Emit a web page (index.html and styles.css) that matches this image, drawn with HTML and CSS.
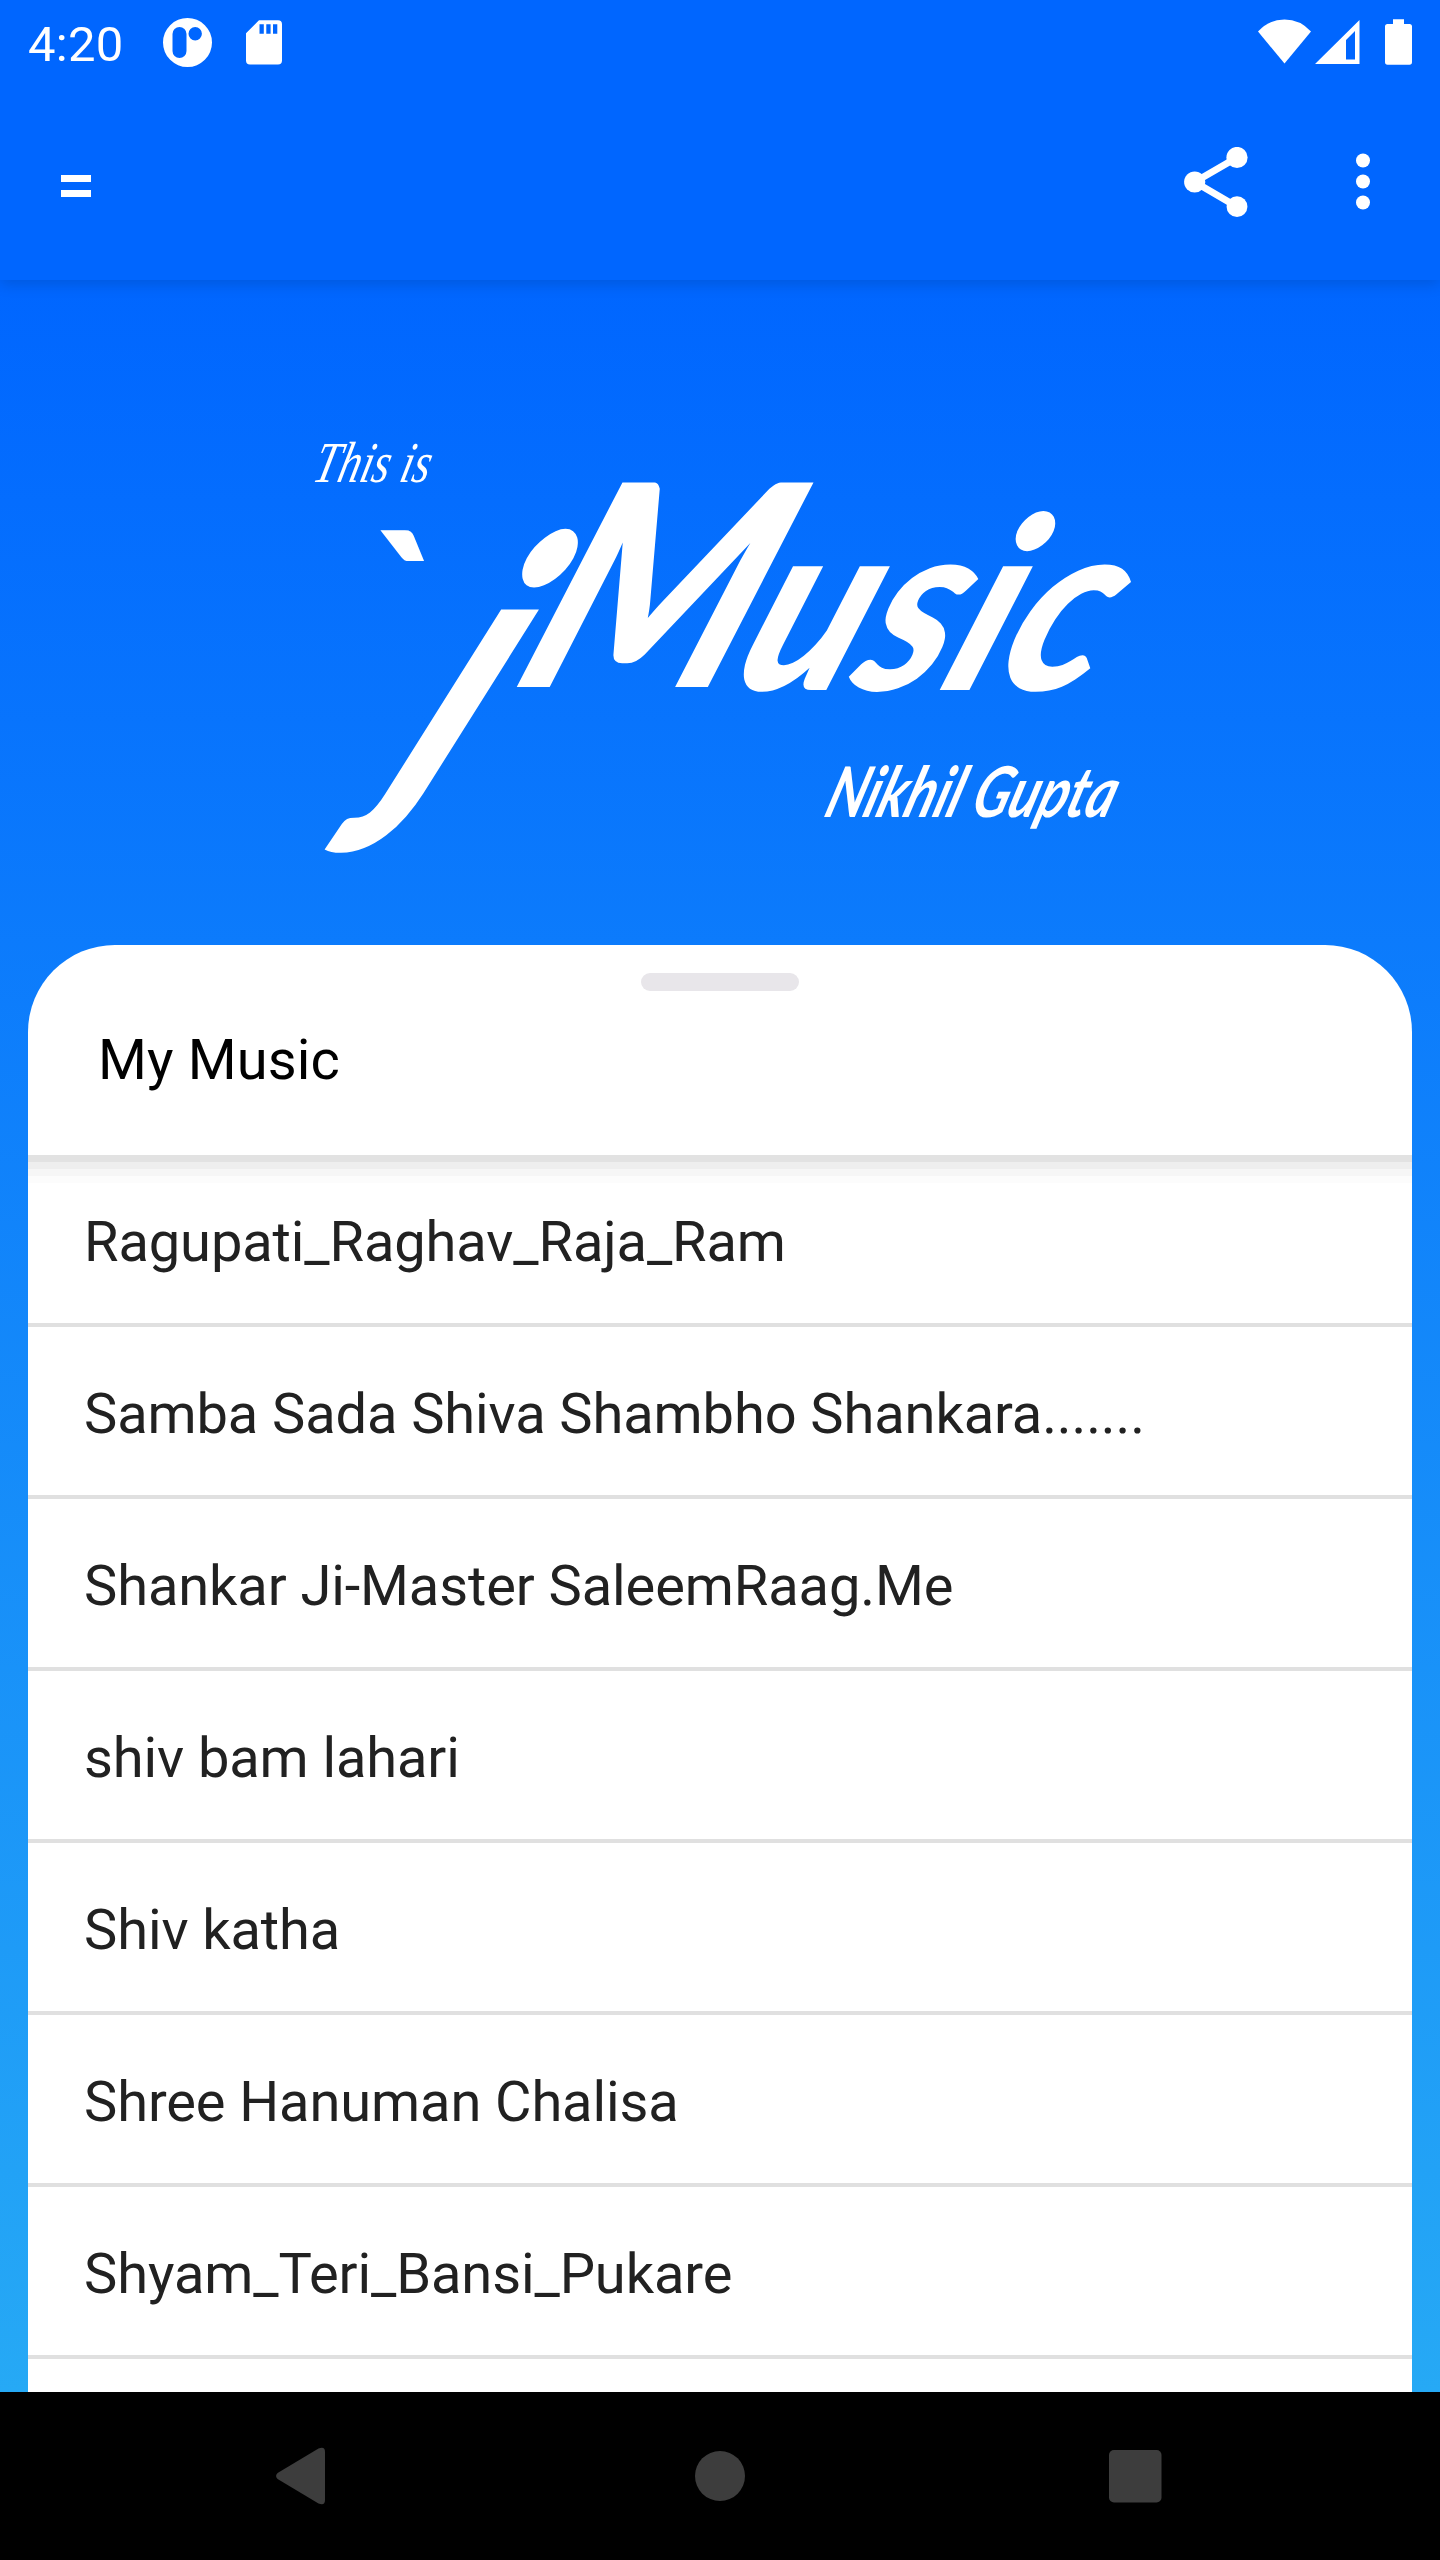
FILE: index.html
```html
<!DOCTYPE html>
<html lang="en">
<head>
<meta charset="utf-8">
<title>jMusic</title>
<link rel="stylesheet" href="styles.css">
</head>
<body>
<div class="screen">
  <header class="top">
    <div class="status">
      <span class="clock">4:20</span>
      <svg class="status-app" width="49" height="49" viewBox="0 0 49 49"><path fill="#fff" fill-rule="evenodd" d="M24.500 0a24.500 24.500 0 1 0 0 49a24.500 24.500 0 1 0 0-49zM16.500 9a7 7 0 0 1 7 7v17a7 7 0 0 1-14 0v-17a7 7 0 0 1 7-7zM32.200 9a6.700 6.700 0 1 1 0 13.400a6.700 6.700 0 1 1 0-13.400z"/></svg>
      <svg class="status-sd" width="36" height="45" viewBox="0 0 36 45"><path fill="#fff" fill-rule="evenodd" d="M13 .3H32a4 4 0 0 1 4 4V40.500a4 4 0 0 1-4 4H4a4 4 0 0 1-4-4V13.300zM13.500 4.300v9.500h4.300v-9.500zM20.300 4.300v9.500h4.300v-9.500zM27 4.300v9.500h4.300v-9.500z"/></svg>
      <div class="status-right">
        <svg width="53" height="46" viewBox="0 0 53 46"><path fill="#fff" d="M0 12.500Q11 .5 26.500 .5T53 12.500L26.500 44.500z"/></svg>
        <svg class="cell" width="45" height="46" viewBox="0 0 45 46"><path fill="#fff" fill-rule="evenodd" d="M0 45L44.500 1V45zM31 21V40.500h9V12z"/></svg>
        <svg class="battery" width="27" height="46" viewBox="0 0 27 46"><path fill="#fff" d="M8 .3H19V5H24.500Q27 5 27 7.500V43Q27 45.700 24.500 45.700H2.500Q0 45.700 0 43V7.500Q0 5 2.500 5H8z"/></svg>
      </div>
    </div>
    <div class="toolbar">
      <div class="menu"><i></i><i></i></div>
      <svg class="share" width="64" height="71" viewBox="0 0 64 71"><g fill="#fff"><circle cx="53" cy="10.500" r="10.600"/><circle cx="10.700" cy="35" r="10.600"/><circle cx="53" cy="59.700" r="10.400"/></g><path d="M53 10.500L10.700 35L53 59.700" fill="none" stroke="#fff" stroke-width="6.800"/></svg>
      <svg class="more" width="14" height="57" viewBox="0 0 14 57"><g fill="#fff"><circle cx="7" cy="7.500" r="7"/><circle cx="7" cy="28.500" r="7"/><circle cx="7" cy="49.500" r="7"/></g></svg>
    </div>
  </header>
  <main class="content">
    <svg class="logo" width="1440" height="660" viewBox="0 285 1440 660" fill="#fff">
      <text class="logo-intro" transform="translate(311 482) skewX(-14)" textLength="116" lengthAdjust="spacingAndGlyphs">This is</text>
      <text class="logo-mark" transform="translate(358 680)">`</text>
      <text class="logo-j" transform="translate(382 790) skewX(-28) scale(.8 1)">j</text>
      <text class="logo-m" transform="translate(508 687) skewX(-22)" textLength="228" lengthAdjust="spacingAndGlyphs">M</text>
      <text class="logo-usic" transform="translate(727 690) skewX(-22)" textLength="362" lengthAdjust="spacingAndGlyphs">usic</text>
      <text class="logo-author" transform="translate(822 817) skewX(-18)" textLength="288" lengthAdjust="spacingAndGlyphs">Nikhil Gupta</text>
    </svg>
    <section class="sheet">
      <div class="sheet-head">
        <div class="handle"></div>
        <h1>My Music</h1>
      </div>
      <ul class="songs">
        <li>Ragupati_Raghav_Raja_Ram</li>
        <li>Samba Sada Shiva Shambho Shankara.......</li>
        <li>Shankar Ji-Master SaleemRaag.Me</li>
        <li>shiv bam lahari</li>
        <li>Shiv katha</li>
        <li>Shree Hanuman Chalisa</li>
        <li>Shyam_Teri_Bansi_Pukare</li>
      </ul>
    </section>
  </main>
  <nav class="navbar">
    <svg width="1440" height="168" viewBox="0 0 1440 168"><g fill="#3d3d3d"><path d="M277.600 81L318.500 56.600Q325 54 325 60V108Q325 114 318.500 111.400L277.600 87Q274.500 84 277.600 81z"/><circle cx="720" cy="84" r="25"/><rect x="1109" y="58" width="52.500" height="52.500" rx="5"/></g></svg>
  </nav>
</div>
</body>
</html>
```

FILE: styles.css
```css
* { box-sizing: border-box; }
body { margin: 0; font-family: Roboto, sans-serif; }
svg { display: block; flex: none; }
.screen { width: 1440px; height: 2560px; display: flex; flex-direction: column; overflow: hidden; background: #000; }
.top { height: 280px; flex: none; background: #06f; color: #fff; z-index: 1; box-shadow: 0 4px 14px rgba(0, 0, 0, .14); }
.status { height: 84px; display: flex; align-items: flex-start; padding: 0 28px; }
.clock { width: 135px; font-size: 49px; line-height: 57px; padding-top: 16px; letter-spacing: .3px; }
.status-app { margin-top: 18px; }
.status-sd { margin: 20px 0 0 34px; }
.status-right { display: flex; margin: 19px 0 0 auto; }
.cell { margin-left: 4px; }
.battery { margin-left: 25px; }
.toolbar { height: 196px; display: flex; align-items: flex-start; padding: 63px 70px 0 61px; }
.menu { display: flex; flex-direction: column; gap: 8px; margin: 28px auto 0 0; }
.menu i { width: 30px; height: 7px; background: #fff; }
.share { margin-right: 108px; }
.more { margin-top: 6px; }
.content { height: 2112px; flex: none; padding: 5px 28px 0; background: linear-gradient(#06f, #26a9f5); }
.logo { margin-left: -28px; }
.logo-intro { font: italic 58px "Liberation Serif", serif; }
.logo-mark { font: italic 900 205px Lato, sans-serif; }
.logo-j { font: italic 900 350px Lato, sans-serif; }
.logo-m { font: italic 900 282px Lato, sans-serif; }
.logo-usic { font: italic 900 240px Lato, sans-serif; }
.logo-author { font: italic 700 70px Lato, sans-serif; }
.sheet { height: 1447px; background: #fff; border-radius: 87px 87px 0 0; overflow: hidden; }
.sheet-head { height: 210px; padding-top: 28px; }
.handle { width: 158px; height: 18px; margin: 0 auto; border-radius: 9px; background: #e8e6ea; }
h1 { margin: 36px 0 0 70px; font-size: 56px; font-weight: 400; line-height: 66px; letter-spacing: .15px; color: #000; }
.songs { margin: 0; padding: 0; list-style: none; background: linear-gradient(#e2e2e2 7px, #eee 7px 14px, #f6f6f6 14px 21px, #fcfcfc 21px 28px, #fff 28px); }
.songs li { height: 172px; padding: 54px 56px 0; border-bottom: 4px solid #e0e0e0; font-size: 56px; line-height: 66px; letter-spacing: -.1px; color: #212121; white-space: nowrap; }
.navbar { height: 168px; flex: none; }
```
